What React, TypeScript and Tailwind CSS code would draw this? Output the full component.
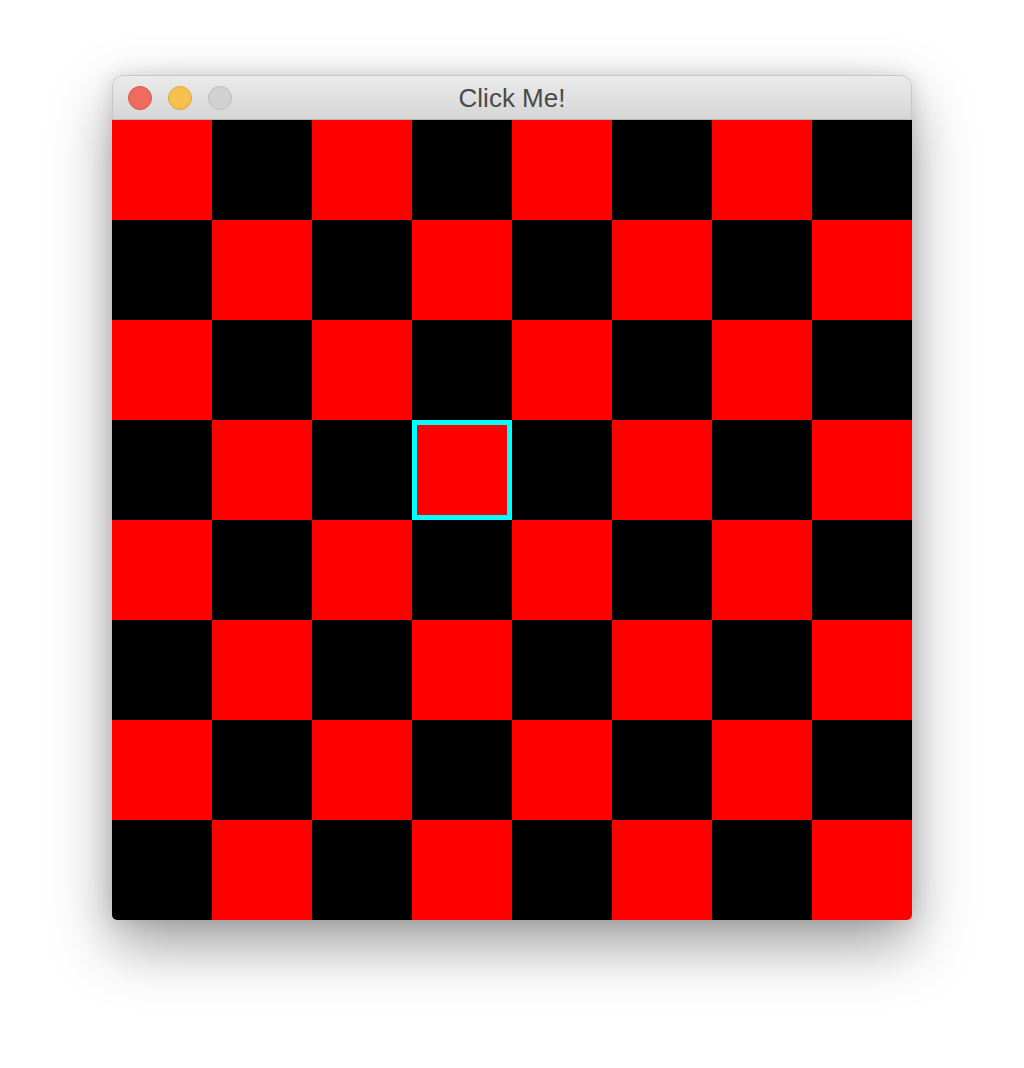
import React from "react";

export default function App() {
  const cells = [];
  for (let r = 0; r < 8; r++) {
    for (let c = 0; c < 8; c++) {
      const red = (r + c) % 2 === 0;
      const sel = r === 3 && c === 3;
      cells.push(
        <div
          key={`${r}-${c}`}
          className={`w-[100px] h-[100px] ${red ? "bg-[#ff0000]" : "bg-black"} ${sel ? "border-[5px] border-[#00ffff]" : ""}`}
        />
      );
    }
  }
  return (
    <div className="w-[1024px] h-[1068px] bg-white flex justify-center pt-[75px]">
      <div className="w-[800px] h-[845px] flex flex-col rounded-t-[10px] rounded-b-[5px] overflow-hidden shadow-[0_25px_60px_rgba(0,0,0,0.38),0_0_20px_rgba(0,0,0,0.12)]">
        <div className="relative h-[45px] flex items-center border border-b border-[#c6c6c6] border-b-[#b9b9b9] rounded-t-[10px] bg-gradient-to-b from-[#ebebeb] to-[#d5d5d5]">
          <div className="flex items-center gap-[16px] pl-[15px]">
            <div className="w-[24px] h-[24px] rounded-full bg-[#ee6b60] border border-[#d65549]" />
            <div className="w-[24px] h-[24px] rounded-full bg-[#f6c04f] border border-[#dba63f]" />
            <div className="w-[24px] h-[24px] rounded-full bg-[#d1d1d1] border border-[#bcbcbc]" />
          </div>
          <div
            className="absolute inset-0 flex items-center justify-center text-[26px] text-[#4a4a4a] pt-[1px]"
            style={{ fontFamily: '"Liberation Sans", Arial, sans-serif' }}
          >
            Click Me!
          </div>
        </div>
        <div className="grid grid-cols-[repeat(8,100px)]">{cells}</div>
      </div>
    </div>
  );
}
